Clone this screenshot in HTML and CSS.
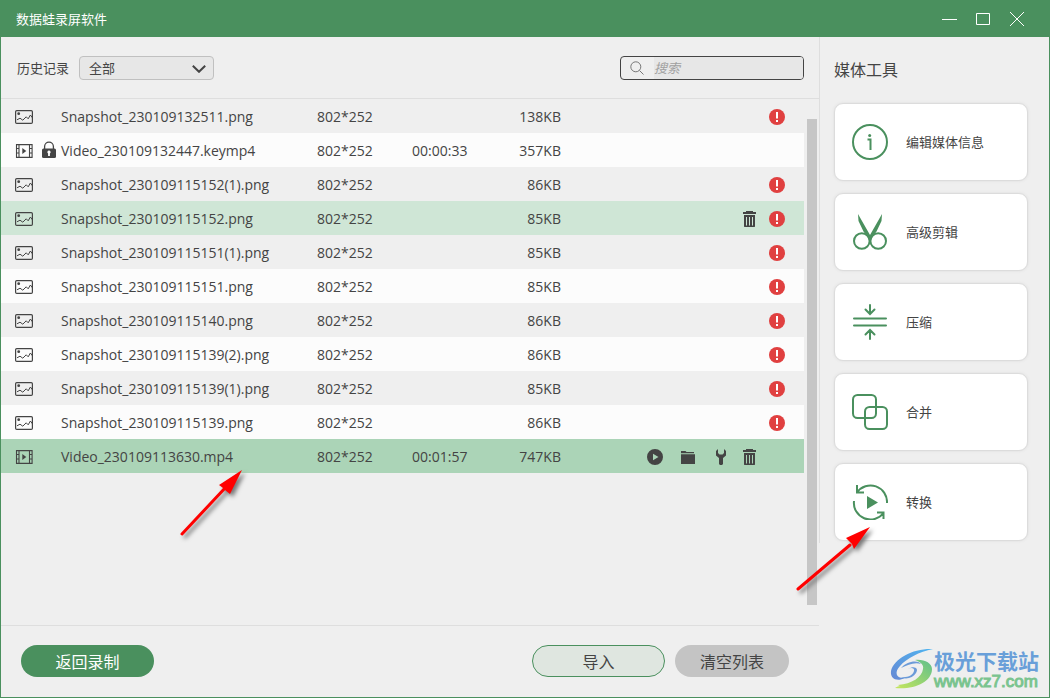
FILE: index.html
```html
<!DOCTYPE html>
<html lang="zh-CN">
<head>
<meta charset="utf-8">
<title>数据蛙录屏软件</title>
<link rel="stylesheet" href="styles.css">
</head>
<body>
<svg class="sprite" aria-hidden="true">
  <symbol id="image" viewBox="0 0 18 14"><rect x=".6" y=".6" width="16.800" height="12.800" rx="1.200" fill="none" stroke="currentColor" stroke-width="1.200"/><path d="M2 9.800l3-1.600 2.800 2L11.200 6.800l2 2L15.400 5l2 2.800" fill="none" stroke="currentColor" stroke-width="1"/><circle cx="3.700" cy="3.700" r="1.400" fill="currentColor"/></symbol>
  <symbol id="video" viewBox="0 0 18 14"><path d="M1.500 .6h15.600v12.800H1.500zM4 .6v12.800M14.500 .6v12.800M1.500 4.500H4M1.500 9H4M14.500 4.500h2.600M14.500 9h2.600" fill="none" stroke="currentColor" stroke-width="1.100"/><path d="M7.300 4v6l4-3z" fill="currentColor"/></symbol>
  <symbol id="lock" viewBox="0 0 16 18"><path d="M3.600 8V5.500a4.400 4.400 0 0 1 8.800 0V8" fill="none" stroke="currentColor" stroke-width="1.300"/><rect x="1" y="7.500" width="14" height="9.500" rx="1.500" fill="currentColor"/><path d="M8 9.500a1.700 1.700 0 0 0-.9 3.100V15h1.800v-2.400A1.700 1.700 0 0 0 8 9.500z" fill="#fff"/></symbol>
  <symbol id="error" viewBox="0 0 16 16"><circle cx="8" cy="8" r="8" fill="#e04040"/><path d="M7 3h2v6.500H7zM7 11h2v2H7z" fill="#fff"/></symbol>
  <symbol id="play" viewBox="0 0 16 16"><path fill-rule="evenodd" d="M8 0a8 8 0 1 1 0 16A8 8 0 0 1 8 0zM6 4.800v6.400L11.500 8z" fill="currentColor"/></symbol>
  <symbol id="folder" viewBox="0 0 16 16"><path d="M1 5V2h4.500l1 1H14v1.200H1zM1 5.200h14V15H1z" fill="currentColor"/></symbol>
  <symbol id="wrench" viewBox="0 0 16 16"><path d="M6 0L4 2v4.500L7 9v6l1 1h2l1-1V9l3-2.500V2l-2-2v4l-1.500 1.500h-3L6 4z" fill="currentColor"/></symbol>
  <symbol id="trash" viewBox="0 0 16 16"><path fill-rule="evenodd" d="M5 0h7v1h3v2H2V1h3zM3 4h11v11.500l-.5.5h-10l-.5-.5zM5 6v8.500h1V6zM8 6v8.500h1V6zM11 6v8.500h1V6z" fill="currentColor"/></symbol>
</svg>
<div class="window">
  <header class="titlebar">
    <h1 class="app-name">数据蛙录屏软件</h1>
    <div class="controls">
      <button class="control" aria-label="最小化"><svg viewBox="0 0 16 16"><path d="M1 8.500h15"/></svg></button>
      <button class="control" aria-label="最大化"><svg viewBox="0 0 16 16"><path d="M1.500 2.500h13v11h-13z"/></svg></button>
      <button class="control" aria-label="关闭"><svg viewBox="0 0 16 16"><path d="M1 1l14 14M15 1L1 15"/></svg></button>
    </div>
  </header>
  <div class="content">
    <main class="history">
      <div class="toolbar">
        <label class="filter-label" for="filter">历史记录</label>
        <div class="filter">
          <select id="filter" class="filter-select"><option>全部</option></select>
          <svg class="chevron" viewBox="0 0 14 8"><path d="M.8.800L7 6.800 13.200.800"/></svg>
        </div>
        <label class="search">
          <svg class="search-icon" viewBox="0 0 14 14"><circle cx="5.800" cy="5.800" r="5"/><path d="M9.500 9.500l4 4"/></svg>
          <input class="search-input" type="text" placeholder="搜索" aria-label="搜索">
        </label>
      </div>
      <div class="list">
        <div class="list-scroll">
          <table class="files">
            <colgroup><col class="c-type"><col class="c-lock"><col class="c-name"><col class="c-res"><col class="c-time"><col class="c-size"><col></colgroup>
            <tbody>
              <tr><td class="type"><svg><use href="#image"/></svg></td><td></td><td>Snapshot_230109132511.png</td><td>802*252</td><td></td><td class="size">138KB</td><td><div class="actions"><button class="act error" aria-label="错误"><svg><use href="#error"/></svg></button></div></td></tr>
              <tr><td class="type"><svg><use href="#video"/></svg></td><td class="lock"><svg><use href="#lock"/></svg></td><td>Video_230109132447.keymp4</td><td>802*252</td><td>00:00:33</td><td class="size">357KB</td><td></td></tr>
              <tr><td class="type"><svg><use href="#image"/></svg></td><td></td><td>Snapshot_230109115152(1).png</td><td>802*252</td><td></td><td class="size">86KB</td><td><div class="actions"><button class="act error" aria-label="错误"><svg><use href="#error"/></svg></button></div></td></tr>
              <tr class="hovered"><td class="type"><svg><use href="#image"/></svg></td><td></td><td>Snapshot_230109115152.png</td><td>802*252</td><td></td><td class="size">85KB</td><td><div class="actions"><button class="act trash" aria-label="删除"><svg><use href="#trash"/></svg></button><button class="act error" aria-label="错误"><svg><use href="#error"/></svg></button></div></td></tr>
              <tr><td class="type"><svg><use href="#image"/></svg></td><td></td><td>Snapshot_230109115151(1).png</td><td>802*252</td><td></td><td class="size">85KB</td><td><div class="actions"><button class="act error" aria-label="错误"><svg><use href="#error"/></svg></button></div></td></tr>
              <tr><td class="type"><svg><use href="#image"/></svg></td><td></td><td>Snapshot_230109115151.png</td><td>802*252</td><td></td><td class="size">85KB</td><td><div class="actions"><button class="act error" aria-label="错误"><svg><use href="#error"/></svg></button></div></td></tr>
              <tr><td class="type"><svg><use href="#image"/></svg></td><td></td><td>Snapshot_230109115140.png</td><td>802*252</td><td></td><td class="size">86KB</td><td><div class="actions"><button class="act error" aria-label="错误"><svg><use href="#error"/></svg></button></div></td></tr>
              <tr><td class="type"><svg><use href="#image"/></svg></td><td></td><td>Snapshot_230109115139(2).png</td><td>802*252</td><td></td><td class="size">86KB</td><td><div class="actions"><button class="act error" aria-label="错误"><svg><use href="#error"/></svg></button></div></td></tr>
              <tr><td class="type"><svg><use href="#image"/></svg></td><td></td><td>Snapshot_230109115139(1).png</td><td>802*252</td><td></td><td class="size">85KB</td><td><div class="actions"><button class="act error" aria-label="错误"><svg><use href="#error"/></svg></button></div></td></tr>
              <tr><td class="type"><svg><use href="#image"/></svg></td><td></td><td>Snapshot_230109115139.png</td><td>802*252</td><td></td><td class="size">86KB</td><td><div class="actions"><button class="act error" aria-label="错误"><svg><use href="#error"/></svg></button></div></td></tr>
              <tr class="selected"><td class="type"><svg><use href="#video"/></svg></td><td></td><td>Video_230109113630.mp4</td><td>802*252</td><td>00:01:57</td><td class="size">747KB</td><td><div class="actions"><button class="act" aria-label="播放"><svg><use href="#play"/></svg></button><button class="act" aria-label="打开文件夹"><svg><use href="#folder"/></svg></button><button class="act" aria-label="工具"><svg><use href="#wrench"/></svg></button><button class="act trash" aria-label="删除"><svg><use href="#trash"/></svg></button></div></td></tr>
            </tbody>
          </table>
        </div>
        <div class="scrollbar"></div>
        <svg class="arrow arrow-row" viewBox="0 0 80 80"><path class="shaft" d="M8 70L52 23"/><path class="head" d="M68 6L45 21l4 3 2 2 5 4z"/></svg>
      </div>
      <footer class="footer">
        <button class="pill primary">返回录制</button>
        <button class="pill outline">导入</button>
        <button class="pill muted">清空列表</button>
      </footer>
    </main>
    <aside class="tools">
      <h2 class="tools-title">媒体工具</h2>
      <button class="tool"><svg viewBox="0 0 36 36"><circle cx="18" cy="18" r="17"/><path d="M15.500 15.500h3V26"/><circle class="solid" cx="17.700" cy="11.500" r="1.500"/></svg><span>编辑媒体信息</span></button>
      <button class="tool"><svg viewBox="0 0 36 36"><circle cx="9.800" cy="27" r="7.800"/><circle cx="26.200" cy="27" r="7.800"/><path class="solid" d="M6 0L6.500 7 11.500 17.500 18 26.500l6.500-9L29.500 7 30 0 18 21z"/></svg><span>高级剪辑</span></button>
      <button class="tool"><svg viewBox="0 0 36 36"><path d="M2 14.500h32M2 21.500h32M18 1v8.500M13.500 5.500L18 10l4.500-4.500M18 35v-8.500M13.500 30.500L18 26l4.500 4.500" stroke-linecap="round"/></svg><span>压缩</span></button>
      <button class="tool"><svg viewBox="0 0 36 36"><rect x="1" y="1" width="23" height="23" rx="4.500"/><rect x="13" y="13" width="22" height="22" rx="4.500"/></svg><span>合并</span></button>
      <button class="tool"><svg viewBox="0 0 36 36"><path d="M5 8.500A16.500 16.500 0 0 1 35 19M2 17A16.500 16.500 0 0 0 31.500 29M5 1v7.500h7M25 28.500h6.500V35"/><path class="solid" d="M15 12v13l11-6.500z"/></svg><span>转换</span></button>
      <svg class="arrow arrow-tool" viewBox="0 0 90 80"><path class="shaft" d="M8 68L60 24"/><path class="head" d="M80 6L56 17l4 4 2 2 2 5z"/></svg>
    </aside>
  </div>
  <div class="watermark">
    <svg class="swirl" viewBox="0 0 44 42">
      <defs>
        <linearGradient id="blue" x1="1" y1="0" x2="0" y2="1"><stop offset="0" stop-color="#4eb4f0"/><stop offset="1" stop-color="#6689d4"/></linearGradient>
        <linearGradient id="green" x1="1" y1="0" x2="0" y2="1"><stop offset="0" stop-color="#5fbf8c"/><stop offset="1" stop-color="#c6e65c"/></linearGradient>
      </defs>
      <path d="M43 1C24 0 4 10 1 23c-1 8 6 11 14 7-9 1-11-6-5-12C17 10 29 4 43 1z" fill="url(#blue)"/>
      <path d="M10 29c8 1 13-2 14-6 1-3-3-4-6-2 7-4 11 0 8 4-3 5-10 7-16 4zM11 20c5-6 16-9 20-4-7-2-13 1-20 4z" fill="#6b9bd8"/>
      <path d="M25 12c9-1 17 3 17 9 0 13-18 21-37 19 3-2 5-2 8-2-3 0-4 0-5-1 14-1 24-8 25-16 1-4-2-7-8-9z" fill="url(#green)"/>
    </svg>
    <div class="mark-text"><span class="mark-name">极光下载站</span><span class="mark-url">www.xz7.com</span></div>
  </div>
</div>
</body>
</html>
```
FILE: styles.css
```css
* { box-sizing: border-box; }

body {
  margin: 0;
  background: #efefef;
  color: #444;
  font: 14px/20px "Open Sans", "Noto Sans CJK SC", sans-serif;
}

button, input, select { font: inherit; color: inherit; }
button { padding: 0; border: 0; background: none; }
svg { display: block; }
.sprite { position: absolute; width: 0; height: 0; }

.window {
  position: relative;
  display: flex;
  flex-direction: column;
  min-height: 100vh;
  border: 1px solid #4a905e;
  border-top: 0;
}

.titlebar {
  display: flex;
  align-items: center;
  justify-content: space-between;
  height: 37px;
  padding: 1px 24px 0 15px;
  background: #4a905e;
  color: #fff;
}
.app-name {
  margin: 0;
  font: 400 13px/20px "Noto Sans CJK SC", sans-serif;
}
.controls { display: flex; gap: 18px; }
.control svg {
  width: 16px;
  height: 16px;
  fill: none;
  stroke: #fff;
}

.content { display: flex; flex: 1; }
.history {
  display: flex;
  flex: 1;
  flex-direction: column;
  min-width: 0;
}

.toolbar {
  display: flex;
  align-items: center;
  height: 62px;
  padding: 0 15px 0 16px;
  border-bottom: 1px solid #dedede;
  font: 13px/20px "Noto Sans CJK SC", sans-serif;
}
.filter { position: relative; margin-left: 10px; }
.filter-select {
  display: block;
  width: 135px;
  height: 24px;
  padding: 0 9px;
  border: 1px solid #c0c0c0;
  border-radius: 4px;
  background: #e7e7e7;
  appearance: none;
}
.chevron {
  position: absolute;
  top: 9px;
  right: 8px;
  width: 14px;
  height: 8px;
  fill: none;
  stroke: #444;
  stroke-width: 2;
  pointer-events: none;
}
.search {
  display: flex;
  align-items: center;
  width: 184px;
  height: 24px;
  margin-left: auto;
  overflow: hidden;
  border: 1px solid #444;
  border-radius: 4px;
}
.search-icon {
  flex: none;
  width: 14px;
  height: 14px;
  margin: 0 10px 0 9px;
  fill: none;
  stroke: #777;
}
.search-input {
  flex: 1;
  min-width: 0;
  height: 22px;
  padding: 0;
  border: 0;
  outline: 0;
  background: #e7e7e7;
}
.search-input::placeholder { color: #a0a0a0; font-style: italic; }

.list {
  position: relative;
  display: flex;
  flex: 1;
  gap: 3px;
  padding-right: 2px;
}
.list-scroll { flex: 1; min-width: 0; }
.scrollbar {
  width: 10px;
  margin: 20px 0;
  background: #c6c6c6;
}

.files {
  width: 100%;
  border-collapse: collapse;
  table-layout: fixed;
}
.c-type { width: 40px; }
.c-lock { width: 20px; }
.c-name { width: 256px; }
.c-res { width: 95px; }
.c-time { width: 90px; }
.c-size { width: 59px; }
.files td { height: 34px; padding: 2px 0 0; white-space: nowrap; }
.files tr:nth-child(even) { background: #fcfcfc; }
.files tr.hovered { background: #cfe6d6; }
.files tr.selected { background: #abd4b7; }
.files .type { padding: 2px 0 0 14px; }
.type svg { width: 18px; height: 14px; }
.files .lock { padding: 0; }
.lock svg { width: 16px; height: 18px; }
.size { text-align: right; }
.actions {
  display: grid;
  grid-template-columns: 33px 32px 29px 28px 16px;
  align-items: start;
  justify-content: end;
  height: 16px;
  padding-right: 19px;
}
.act { width: 16px; height: 16px; }
.act svg { width: 16px; height: 16px; }
.trash { grid-column: 4; }
.error { grid-column: 5; }

.footer {
  display: flex;
  align-items: center;
  gap: 10px;
  height: 72px;
  padding: 0 30px 2px 20px;
  border-top: 1px solid #dedede;
}
.pill {
  height: 32px;
  border-radius: 16px;
  font: 16px/32px "Noto Sans CJK SC", sans-serif;
}
.primary {
  width: 133px;
  margin-right: auto;
  background: #4a905e;
  color: #fff;
}
.outline {
  width: 133px;
  border: 1px solid #4a905e;
  background: #dfe6e0;
  line-height: 30px;
}
.muted { width: 114px; background: #c4c4c4; }

.tools {
  position: relative;
  display: flex;
  flex-direction: column;
  align-self: flex-start;
  gap: 12px;
  width: 230px;
  padding: 20px 21px 2px 14px;
  border-left: 1px solid #dedede;
}
.tools-title {
  margin: 0 0 10px;
  font: 400 16px/24px "Noto Sans CJK SC", sans-serif;
}
.tool {
  display: flex;
  align-items: center;
  gap: 18px;
  height: 78px;
  padding: 0 17px;
  border: 1px solid #dcdcdc;
  border-radius: 9px;
  background: #fff;
  box-shadow: 0 0 3px #ddd;
  font: 13px/20px "Noto Sans CJK SC", sans-serif;
}
.tool svg {
  width: 36px;
  height: 36px;
  fill: none;
  stroke: #4a905e;
  stroke-width: 2;
}
.tool .solid { fill: #4a905e; stroke: none; }

.arrow {
  position: absolute;
  filter: drop-shadow(3px 3px 2px #777);
  pointer-events: none;
}
.shaft {
  fill: none;
  stroke: #f00;
  stroke-width: 3;
  stroke-linecap: round;
}
.head { fill: #f00; }
.arrow-row { top: 365px; left: 173px; width: 80px; height: 80px; }
.arrow-tool { top: 484px; left: -30px; width: 90px; height: 80px; }

.watermark {
  position: absolute;
  right: 10px;
  bottom: 6px;
  display: flex;
  align-items: center;
}
.swirl { width: 44px; height: 42px; }
.mark-text {
  display: flex;
  flex-direction: column;
  white-space: nowrap;
}
.mark-name {
  color: #699fd9;
  font: 700 21px/26px "Noto Sans CJK SC", sans-serif;
}
.mark-url {
  color: #7ac48f;
  font: 17px/18px "Liberation Sans", sans-serif;
  -webkit-text-stroke: 1px #7ac48f;
}
```
